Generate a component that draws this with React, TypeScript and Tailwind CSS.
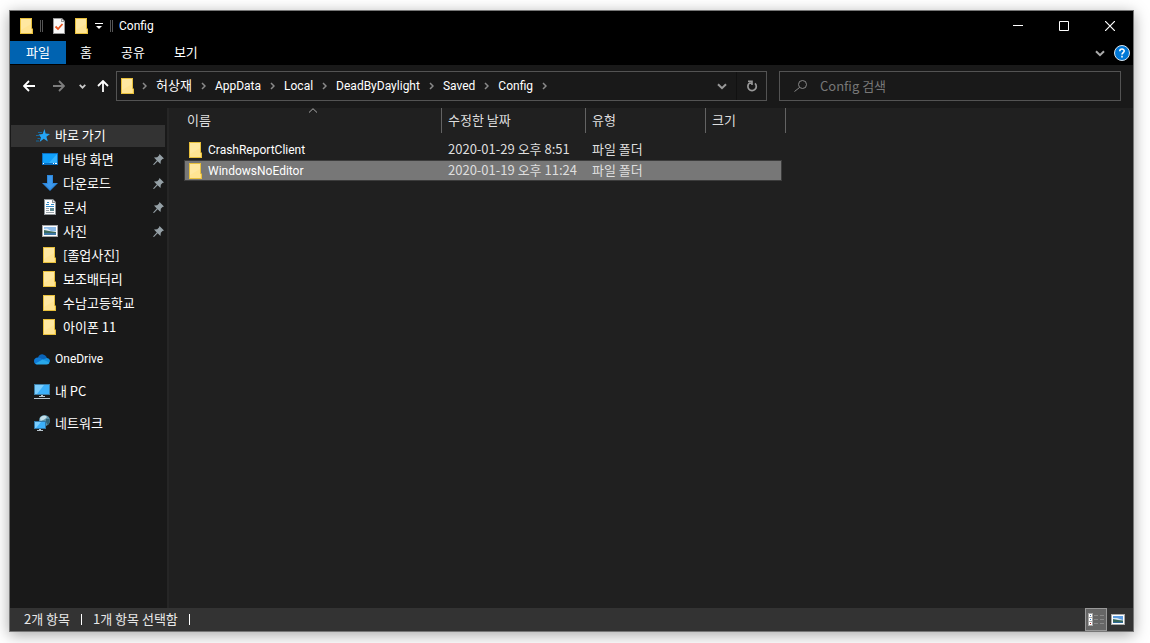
import { useState } from 'react';
import type { ReactNode } from 'react';
import clsx from 'clsx';

interface NavItem {
  label: string;
  icon: ReactNode;
  pinned?: boolean;
  latin?: boolean;
}

interface FileRow {
  name: string;
  modified: string;
  type: string;
  size: string;
}

const LATIN = "font-['Roboto','Noto_Sans_CJK_KR',sans-serif] text-[12px]";

const crumbs = ['허상재', 'AppData', 'Local', 'DeadByDaylight', 'Saved', 'Config'];

const files: FileRow[] = [
  { name: 'CrashReportClient', modified: '2020-01-29 오후 8:51', type: '파일 폴더', size: '' },
  { name: 'WindowsNoEditor', modified: '2020-01-19 오후 11:24', type: '파일 폴더', size: '' },
];

function FolderIcon() {
  return (
    <svg width="14" height="16" viewBox="0 0 14 16" className="shrink-0">
      <path d="M0 0H12V10L13 11V16H0Z" fill="#e8c03c" />
      <path d="M1 1H11V15H1Z" fill="#ffe493" />
      <path d="M1 1H11V6L1 12Z" fill="#ffe9a6" opacity="0.7" />
      <path d="M11 11H12V15H11Z" fill="#ffdf7e" />
    </svg>
  );
}

function PropertiesIcon() {
  return (
    <svg width="12" height="16" viewBox="0 0 12 16" className="shrink-0">
      <path d="M0 0H9L12 3V16H0Z" fill="#9a9a9a" />
      <path d="M1 1H8V4H11V15H1Z" fill="#f8f8f8" />
      <path d="M9 1.5V3H10.5Z" fill="#fff" />
      <path d="M2.5 8.5L5 11L9.5 6" fill="none" stroke="#e8531e" strokeWidth="1.8" />
    </svg>
  );
}

function ChevronIcon({ className }: { className?: string }) {
  return (
    <svg width="5" height="8" viewBox="0 0 5 8" className={className}>
      <path d="M1 1L4 4L1 7" fill="none" stroke="#8a8a8a" strokeWidth="1.5" />
    </svg>
  );
}

function ChevronDownIcon({ small, className }: { small?: boolean; className?: string }) {
  return (
    <svg width={small ? 7 : 10} height={small ? 5 : 7} viewBox="0 0 10 7" className={className}>
      <path d="M1 1.2L5 5.2L9 1.2" fill="none" stroke="currentColor" strokeWidth={small ? 2.4 : 2} />
    </svg>
  );
}

function ArrowIcon({ rotate = '' }: { rotate?: string }) {
  return (
    <svg width="12" height="12" viewBox="0 0 12 12" className={rotate}>
      <path d="M6 1L1 6L6 11M1 6H12" fill="none" stroke="currentColor" strokeWidth="1.8" />
    </svg>
  );
}

function StarIcon() {
  return (
    <svg width="14" height="14" viewBox="0 0 14 14">
      <path d="M8.5 0L9.6 4.6L14 5L10.4 7.8L11.8 12.6L7.8 9.8L3.6 13L5 8.4L2.6 5.4L6.6 5Z" fill="#25a5f5" />
      <path d="M2 3.5H6M0 6.5H4M1.5 9.5H4.5M0 12H3" stroke="#14689e" strokeWidth="1" />
    </svg>
  );
}

function DesktopIcon() {
  return (
    <svg width="16" height="12" viewBox="0 0 16 12">
      <path d="M0 0H16V12H0Z" fill="#0a6fc0" />
      <path d="M1 1H15V10H1Z" fill="#10a0fb" />
      <path d="M15 1V10H7Z" fill="#35b3ff" />
      <path d="M1 10.5H2M11 10.5H12M13 10.5H15" stroke="#fff" />
    </svg>
  );
}

function DownloadIcon() {
  return (
    <svg width="16" height="16" viewBox="0 0 16 16">
      <path d="M5 0H11V8H16L8 16L0 8H5Z" fill="#2d87dc" />
      <path d="M6 1H10V9H13L8 14L3 9H6Z" fill="#3c98ec" />
    </svg>
  );
}

function DocumentIcon() {
  return (
    <svg width="12" height="16" viewBox="0 0 12 16">
      <path d="M0 0H9L12 3V16H0Z" fill="#8e9498" />
      <path d="M1 1H8V4H11V15H1Z" fill="#fff" />
      <path d="M9 1V3H11Z" fill="#e8e8e8" />
      <path d="M2 5.5H5M7 5.5H10M2 7.5H10M3 3.5H5" stroke="#3088c4" />
      <path d="M2 9.5H5M2 11.5H5M2 13.5H10" stroke="#9aa4aa" />
      <path d="M6 9H10V12H6Z" fill="#5f8a92" />
    </svg>
  );
}

function PictureIcon() {
  return (
    <svg width="16" height="12" viewBox="0 0 16 12">
      <path d="M0 0H16V12H0Z" fill="#a5a5a5" />
      <path d="M1 1H15V11H1Z" fill="#fff" />
      <path d="M2 2H14V10H2Z" fill="#8fbce8" />
      <path d="M2 4L5 3.5L9 6L14 6V8H2Z" fill="#e3eff8" />
      <path d="M2 5L7 6L14 7V8H2Z" fill="#3d6b5e" />
      <path d="M2 8H14V10H2Z" fill="#3f78a6" />
    </svg>
  );
}

function PinIcon() {
  return (
    <svg width="11" height="11" viewBox="0 0 11 11" className="shrink-0">
      <path d="M6.5 0L11 4.5L9.5 5L7.8 6.8L7.5 10L4.6 7.2L1 11L0 10.6L3.8 6.4L1 3.5L4.2 3.2L6 1.5Z" fill="#95a0a6" />
    </svg>
  );
}

function OneDriveIcon() {
  return (
    <svg width="16" height="11" viewBox="0 0 16 11">
      <path d="M4 3.6C5 1 7 0 9 .4C11 .8 12.4 2.2 12.9 4L8 7Z" fill="#0a64b8" />
      <path d="M0 7C0 4.6 2 3.2 4.4 3.5C6 3.6 8 5 10 6L3 10.5C1.2 10.4 0 9 0 7Z" fill="#0f7ad6" />
      <path d="M8 6L12.4 4C14.8 4 16 5.6 16 7.4L14 9Z" fill="#1490df" />
      <path d="M1.4 9.6L8.6 5.6L15.6 8.6C15.2 9.8 14.2 10.6 12.6 10.6H3.6C2.8 10.6 2 10.2 1.4 9.6Z" fill="#28a8ea" />
    </svg>
  );
}

function ComputerIcon() {
  return (
    <svg width="16" height="15" viewBox="0 0 16 15">
      <path d="M0 0H16V11H0Z" fill="#3c7ea6" />
      <path d="M1 1H15V10H1Z" fill="#3cb0fa" />
      <path d="M1 1H10L3 10H1Z" fill="#7bcdfd" />
      <path d="M7 11H9V12H11V13H5V12H7Z" fill="#b9c6ce" />
      <path d="M0 14.5H16" stroke="#b9c6ce" />
    </svg>
  );
}

function NetworkIcon() {
  return (
    <svg width="16" height="16" viewBox="0 0 16 16">
      <circle cx="10.5" cy="5.5" r="5.5" fill="#5d94ac" />
      <path d="M6 3C8 0 12 .4 13 2C12 4 9 5 6.5 6Z" fill="#c4e0ea" />
      <path d="M12 4L15.6 4C16 6 15.4 8.4 13.6 10L12 7Z" fill="#316479" />
      <path d="M0 6H12V14H0Z" fill="#2f78aa" />
      <path d="M1 7H11V13H1Z" fill="#3cb0fa" />
      <path d="M1 7H7L2 13H1Z" fill="#7bcdfd" />
      <path d="M5 14H7V15H9V16H3V15H5Z" fill="#b9c6ce" />
    </svg>
  );
}

const quickItems: NavItem[] = [
  { label: '바탕 화면', icon: <DesktopIcon />, pinned: true },
  { label: '다운로드', icon: <DownloadIcon />, pinned: true },
  { label: '문서', icon: <DocumentIcon />, pinned: true },
  { label: '사진', icon: <PictureIcon />, pinned: true },
  { label: '[졸업사진]', icon: <FolderIcon /> },
  { label: '보조배터리', icon: <FolderIcon /> },
  { label: '수남고등학교', icon: <FolderIcon /> },
  { label: '아이폰 11', icon: <FolderIcon /> },
];

const rootItems: NavItem[] = [
  { label: 'OneDrive', icon: <OneDriveIcon />, latin: true },
  { label: '내 PC', icon: <ComputerIcon /> },
  { label: '네트워크', icon: <NetworkIcon /> },
];

function TitleBar() {
  return (
    <header className="flex h-[30px] items-center bg-black">
      <div className="flex flex-1 items-center pl-[10px]">
        <FolderIcon />
        <span className="ml-1.5 h-3 w-[3px] border-x border-[#555]" />
        <button aria-label="속성" className="ml-[10px]">
          <PropertiesIcon />
        </button>
        <button aria-label="새 폴더" className="ml-[10px]">
          <FolderIcon />
        </button>
        <button aria-label="빠른 실행 도구 모음 사용자 지정" className="ml-1.5">
          <svg width="8" height="7" viewBox="0 0 8 7">
            <path d="M0 .5H8" stroke="#fff" />
            <path d="M1 3H7L4 6Z" fill="#fff" />
          </svg>
        </button>
        <span className="ml-[7px] h-3 w-[3px] border-x border-[#555]" />
        <h1 className={clsx(LATIN, 'ml-1.5')}>Config</h1>
      </div>
      <button aria-label="최소화" className="flex h-full w-[46px] items-center justify-center">
        <svg width="10" height="10" viewBox="0 0 10 10">
          <path d="M0 4.5H10" stroke="#fff" />
        </svg>
      </button>
      <button aria-label="최대화" className="flex h-full w-[46px] items-center justify-center">
        <svg width="10" height="10" viewBox="0 0 10 10">
          <path d="M.5 .5H9.5V9.5H.5Z" fill="none" stroke="#fff" />
        </svg>
      </button>
      <button aria-label="닫기" className="flex h-full w-[46px] items-center justify-center">
        <svg width="10" height="10" viewBox="0 0 10 10">
          <path d="M0 0L10 10M10 0L0 10" stroke="#fff" strokeWidth="1.2" />
        </svg>
      </button>
    </header>
  );
}

function RibbonTabs() {
  return (
    <div className="flex h-6 items-start bg-black">
      <button className="h-[23px] w-14 bg-[#0063b1] pb-0.5">파일</button>
      <div className="flex flex-1 gap-px">
        {['홈', '공유', '보기'].map((tab) => (
          <button key={tab} className="h-[23px] px-3.5 pb-0.5">
            {tab}
          </button>
        ))}
      </div>
      <div className="flex h-6 items-center gap-[9px] pr-[3px] text-[#aaa]">
        <button aria-label="리본 확장">
          <ChevronDownIcon />
        </button>
        <button aria-label="도움말">
          <svg width="16" height="16" viewBox="0 0 16 16">
            <circle cx="8" cy="8" r="7.5" fill="#0078d7" stroke="#d8e6f2" />
            <path d="M5.8 6.2C5.8 3.4 10.2 3.4 10.2 6C10.2 7.6 8 7.6 8 9.6M8 10.8V12.4" fill="none" stroke="#fff" strokeWidth="1.6" />
          </svg>
        </button>
      </div>
    </div>
  );
}

function AddressBar() {
  return (
    <div className="flex items-center bg-[#191919] pt-1.5 pr-3 pb-[7px] pl-[13px]">
      <button aria-label="뒤로" className="text-white">
        <ArrowIcon />
      </button>
      <button aria-label="앞으로" className="ml-[18px] text-[#7d7d7d]">
        <ArrowIcon rotate="rotate-180" />
      </button>
      <button aria-label="최근 위치" className="ml-3.5 text-[#ccc]">
        <ChevronDownIcon small />
      </button>
      <button aria-label="위로" className="ml-[11px] text-white">
        <ArrowIcon rotate="rotate-90" />
      </button>
      <div className="ml-[7px] flex h-[30px] flex-1 items-center border border-[#535353] pl-1">
        <FolderIcon />
        <ChevronIcon className="mr-[9px] ml-[7px]" />
        <nav className={clsx(LATIN, 'flex flex-1 items-center')}>
          {crumbs.map((crumb) => (
            <div key={crumb} className="flex items-center">
              <a href="#" className={crumb === '허상재' ? 'text-[13px]' : ''}>
                {crumb}
              </a>
              <ChevronIcon className="mx-[9px]" />
            </div>
          ))}
        </nav>
        <button aria-label="이전 위치" className="px-[9px] text-[#999]">
          <ChevronDownIcon />
        </button>
        <button aria-label="새로 고침" className="flex h-full w-[30px] items-center justify-center border-l border-[#111]">
          <svg width="12" height="12" viewBox="0 0 12 12">
            <path d="M9 3.4A4.2 4.2 0 1 1 3.4 3.2H6" fill="none" stroke="#999" strokeWidth="1.7" />
            <path d="M2 1.2H6V5" fill="none" stroke="#999" strokeWidth="1.6" />
          </svg>
        </button>
      </div>
      <label className="ml-3 flex h-[30px] w-[342px] items-center border border-[#535353] pl-3.5">
        <svg width="13" height="12" viewBox="0 0 13 12" className="shrink-0">
          <circle cx="8.5" cy="4.5" r="4" fill="none" stroke="#888" />
          <path d="M5.5 7.5L.5 11.5" stroke="#888" />
        </svg>
        <input
          type="search"
          aria-label="Config 검색"
          placeholder="Config 검색"
          className="ml-[13px] min-w-0 flex-1 bg-transparent outline-none placeholder:text-[#777]"
        />
      </label>
    </div>
  );
}

function Sidebar() {
  return (
    <aside className="w-[159px] shrink-0 border-r-2 border-[#262626] bg-[#191919] pt-[17px]">
      <a href="#" className="mr-0.5 ml-px flex h-[22px] items-center gap-[5px] bg-[#333] pl-[25px]">
        <StarIcon />
        <span className="pb-0.5">바로 가기</span>
      </a>
      <ul>
        {quickItems.map((item) => (
          <li key={item.label}>
            <a href="#" className="flex h-6 items-center pr-[3px] pl-8">
              <span className="flex w-4 justify-center">{item.icon}</span>
              <span className="ml-[5px] flex-1 whitespace-nowrap">{item.label}</span>
              {item.pinned && <PinIcon />}
            </a>
          </li>
        ))}
      </ul>
      <ul className="mt-2 space-y-2">
        {rootItems.map((item) => (
          <li key={item.label}>
            <a href="#" className="flex h-6 items-center gap-[5px] pl-6">
              {item.icon}
              <span className={item.latin ? LATIN : ''}>{item.label}</span>
            </a>
          </li>
        ))}
      </ul>
    </aside>
  );
}

function FileTable() {
  const [selected, setSelected] = useState('WindowsNoEditor');
  const cell = 'h-[21px] border-y p-0';
  const heading = 'border-r border-[#636363] p-0 pb-0.5 pl-1.5 font-normal';

  return (
    <main className="flex-1 bg-[#202020] pl-[15px]">
      <table className="w-[602px] table-fixed border-separate border-spacing-0 text-left text-[#dedede]">
        <colgroup>
          <col className="w-[258px]" />
          <col className="w-36" />
          <col className="w-[120px]" />
          <col className="w-20" />
        </colgroup>
        <thead>
          <tr className="h-[25px]">
            <th className="relative border-r border-[#636363] p-0 pb-0.5 pl-[3px] font-normal">
              이름
              <svg width="9" height="5" viewBox="0 0 9 5" className="absolute top-0 left-1/2 -translate-x-1/2">
                <path d="M.5 4.5L4.5 .7L8.5 4.5" fill="none" stroke="#aaa" />
              </svg>
            </th>
            <th className={heading}>수정한 날짜</th>
            <th className={heading}>유형</th>
            <th className={heading}>크기</th>
          </tr>
        </thead>
        <tbody>
          <tr className="h-[6px]">
            <td colSpan={4} className="p-0" />
          </tr>
          {files.map((file) => {
            const tone =
              file.name === selected ? 'border-[#3c3c3c] bg-[#777]' : 'border-transparent';
            return (
              <tr key={file.name} onClick={() => setSelected(file.name)}>
                <td className={clsx(cell, tone, 'border-l')}>
                  <div className="flex h-[19px] items-center gap-[5px] pl-1 text-white">
                    <FolderIcon />
                    <span className={LATIN}>{file.name}</span>
                  </div>
                </td>
                <td className={clsx(cell, tone, 'pb-0.5 pl-1.5 whitespace-nowrap')}>{file.modified}</td>
                <td className={clsx(cell, tone, 'pb-0.5 pl-1.5')}>{file.type}</td>
                <td className="p-0 pr-1">
                  <div className={clsx(cell, tone, 'border-r')}>{file.size}</div>
                </td>
              </tr>
            );
          })}
        </tbody>
      </table>
    </main>
  );
}

function StatusBar() {
  return (
    <footer className="flex h-[23px] items-center bg-[#333] pl-3.5 text-[#e8e8e8]">
      <span className="pb-0.5">2개 항목</span>
      <span className="mx-[11px] h-[11px] w-px bg-white" />
      <span className="pb-0.5">1개 항목 선택함</span>
      <span className="mx-[11px] h-[11px] w-px bg-white" />
      <button
        aria-label="자세히"
        className="ml-auto flex h-full w-[22px] items-center justify-center border border-[#999] bg-[#666]"
      >
        <svg width="16" height="13" viewBox="0 0 16 13">
          <path d="M0 0H5V13H0Z" fill="#a8a8a8" />
          <path d="M1 1H4V4H1ZM1 5H4V8H1ZM1 9H4V12H1Z" fill="#fff" />
          <path d="M2 2H3V3H2Z" fill="#4a6fa0" />
          <path d="M2 6H3V7H2Z" fill="#1b74c8" />
          <path d="M2 10H3V11H2Z" fill="#a02020" />
          <path d="M6 2.5H10M12 2.5H16M6 6.5H10M12 6.5H16M6 10.5H10M12 10.5H16" stroke="#8a8a8a" />
        </svg>
      </button>
      <button aria-label="큰 아이콘" className="mr-2 ml-1">
        <svg width="14" height="11" viewBox="0 0 14 11">
          <path d="M0 0H14V11H0Z" fill="#aaa" />
          <path d="M1 1H13V10H1Z" fill="#fff" />
          <path d="M2 2H12V9H2Z" fill="#5b9be0" />
          <path d="M2 4L6 4L12 6V7H2Z" fill="#d9e8f2" />
          <path d="M2 5L7 6L12 6.5V8H2Z" fill="#37685c" />
          <path d="M2 8H12V9H2Z" fill="#2f6a9a" />
        </svg>
      </button>
    </footer>
  );
}

export default function App() {
  return (
    <div className="flex min-h-screen bg-white pt-[10px] pr-4 pb-[11px] pl-[9px] font-['Noto_Sans_CJK_KR',sans-serif] text-[13px] leading-4 text-white">
      <div className="flex min-w-0 flex-1 flex-col border border-[#777] shadow-[0_3px_14px_rgba(0,0,0,0.35)]">
        <TitleBar />
        <RibbonTabs />
        <AddressBar />
        <div className="flex flex-1">
          <Sidebar />
          <FileTable />
        </div>
        <StatusBar />
      </div>
    </div>
  );
}
